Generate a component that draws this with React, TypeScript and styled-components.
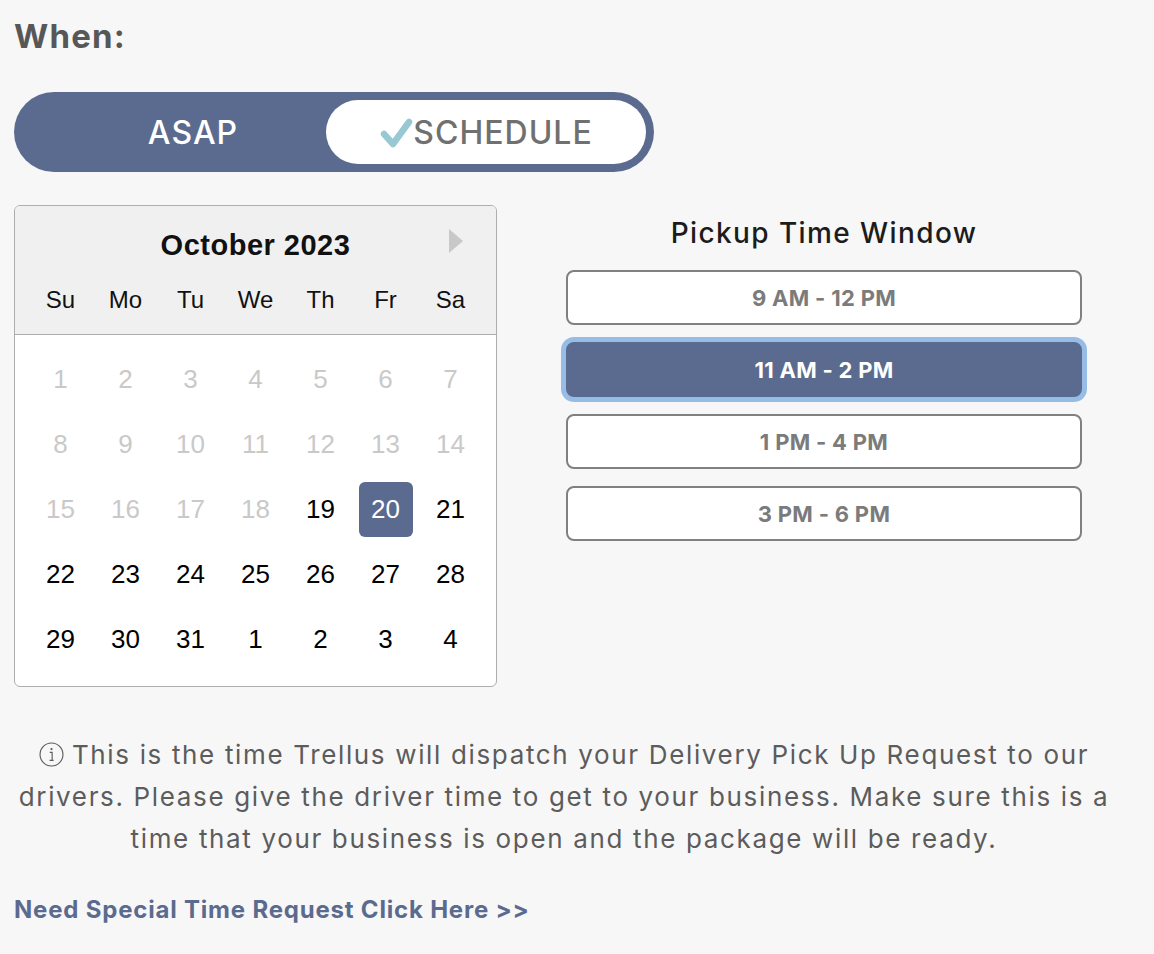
import React from "react";
import styled, { createGlobalStyle, css } from "styled-components";

const GlobalStyle = createGlobalStyle`
  body {
    margin: 0;
    background: #f7f7f7;
    font-family: Inter, "Noto Sans", sans-serif;
  }
`;

const SLATE = "#5b6b8f";

const Page = styled.div`
  width: 1100px;
  padding: 14px 14px 30px;
`;

const Heading = styled.h2`
  margin: 0;
  font-size: 33px;
  line-height: 44px;
  font-weight: 700;
  color: #575757;
  letter-spacing: 1.2px;
`;

const Toggle = styled.div`
  margin-top: 34px;
  width: 640px;
  height: 80px;
  box-sizing: border-box;
  padding: 8px;
  border-radius: 40px;
  background: ${SLATE};
  display: flex;
  align-items: stretch;
`;

const ToggleOption = styled.button<{ $active?: boolean }>`
  border: none;
  border-radius: 32px;
  font-family: Inter, "Noto Sans", sans-serif;
  font-size: 32px;
  font-weight: 500;
  letter-spacing: 1px;
  display: flex;
  align-items: center;
  justify-content: center;
  cursor: pointer;
  ${(p) =>
    p.$active
      ? css`
          width: 320px;
          background: #fff;
          color: #707070;
        `
      : css`
          flex: 1;
          padding-left: 44px;
          background: transparent;
          color: #fff;
        `}
`;

const Check = styled.svg`
  width: 34px;
  height: 32px;
  margin-top: 2px;
`;

const Body = styled.div`
  margin-top: 33px;
  display: flex;
  gap: 69px;
  align-items: flex-start;
`;

const Calendar = styled.div`
  width: 483px;
  box-sizing: border-box;
  border: 1.5px solid #adadad;
  border-radius: 6px;
  background: #fff;
  overflow: hidden;
  font-family: "Liberation Sans", Arial, sans-serif;
`;

const CalHeader = styled.div`
  background: #f0f0f0;
  border-bottom: 1.5px solid #adadad;
  padding: 20px 13px 6px;
`;

const TitleRow = styled.div`
  display: grid;
  grid-template-columns: 1fr auto 1fr;
  align-items: center;
  height: 38px;
`;

const MonthTitle = styled.div`
  font-size: 29px;
  font-weight: 700;
  color: #111;
  letter-spacing: 0.5px;
`;

const NextButton = styled.button`
  justify-self: end;
  margin-right: 20px;
  margin-top: -8px;
  border: none;
  background: none;
  padding: 0;
  width: 0;
  height: 0;
  border-top: 12px solid transparent;
  border-bottom: 12px solid transparent;
  border-left: 14px solid #c8c8c8;
  cursor: pointer;
`;

const Grid = styled.div`
  display: grid;
  grid-template-columns: repeat(7, 65px);
`;

const WeekDay = styled.div`
  height: 56px;
  display: flex;
  align-items: center;
  justify-content: center;
  font-size: 24px;
  color: #111;
  margin-top: 8px;
`;

const DaysBody = styled.div`
  padding: 12px 13px 14px;
`;

const DayCell = styled.div`
  height: 65px;
  display: flex;
  align-items: center;
  justify-content: center;
`;

const Day = styled.button<{ $muted?: boolean; $selected?: boolean }>`
  width: 54px;
  height: 55px;
  border: none;
  border-radius: 6px;
  font-family: "Liberation Sans", Arial, sans-serif;
  font-size: 26px;
  padding: 0;
  cursor: ${(p) => (p.$muted ? "default" : "pointer")};
  background: ${(p) => (p.$selected ? SLATE : "transparent")};
  color: ${(p) => (p.$selected ? "#fff" : p.$muted ? "#c9c9c9" : "#000")};
`;

const TimeColumn = styled.div`
  width: 516px;
  display: flex;
  flex-direction: column;
  align-items: stretch;
  gap: 17px;
`;

const TimeTitle = styled.div`
  margin-top: 10px;
  margin-bottom: 2px;
  text-align: center;
  font-size: 28px;
  line-height: 36px;
  font-weight: 500;
  color: #1c1c1c;
  letter-spacing: 1.4px;
`;

const Slot = styled.button<{ $selected?: boolean }>`
  height: 55px;
  border-radius: 8px;
  border: 2px solid ${(p) => (p.$selected ? SLATE : "#808080")};
  background: ${(p) => (p.$selected ? SLATE : "#fff")};
  color: ${(p) => (p.$selected ? "#fff" : "#7b7b7b")};
  box-shadow: ${(p) => (p.$selected ? "0 0 0 5px #97bde6" : "none")};
  font-family: Inter, "Noto Sans", sans-serif;
  font-size: 22px;
  font-weight: 700;
  letter-spacing: 0.3px;
  cursor: pointer;
`;

const Info = styled.p`
  margin: 47px 0 0;
  text-align: center;
  font-size: 26px;
  line-height: 42px;
  color: #5c5c5c;
  letter-spacing: 1.65px;
`;

const InfoIcon = styled.svg`
  width: 25px;
  height: 25px;
  vertical-align: -3px;
  margin-right: 8px;
`;

const SpecialLink = styled.a`
  display: inline-block;
  margin-top: 36px;
  font-size: 24px;
  line-height: 28px;
  font-weight: 700;
  color: ${SLATE};
  text-decoration: none;
  letter-spacing: 0.8px;
`;

const weekDays = ["Su", "Mo", "Tu", "We", "Th", "Fr", "Sa"];

const days: { n: number; muted: boolean }[] = [
  ...Array.from({ length: 31 }, (_, i) => ({ n: i + 1, muted: i + 1 < 19 })),
  ...[1, 2, 3, 4].map((n) => ({ n, muted: false })),
];

const slots = ["9 AM - 12 PM", "11 AM - 2 PM", "1 PM - 4 PM", "3 PM - 6 PM"];

const App: React.FC = () => {
  const [selectedDay, setSelectedDay] = React.useState(20);
  const [slot, setSlot] = React.useState(1);

  return (
    <>
      <GlobalStyle />
      <Page>
        <Heading>When:</Heading>
        <Toggle>
          <ToggleOption>ASAP</ToggleOption>
          <ToggleOption $active>
            <Check viewBox="0 0 34 32">
              <path
                d="M5 17 L14 27 L30 5"
                fill="none"
                stroke="#98c8d3"
                strokeWidth="6.5"
                strokeLinecap="round"
                strokeLinejoin="round"
              />
            </Check>
            SCHEDULE
          </ToggleOption>
        </Toggle>

        <Body>
          <Calendar>
            <CalHeader>
              <TitleRow>
                <span />
                <MonthTitle>October 2023</MonthTitle>
                <NextButton aria-label="Next month" />
              </TitleRow>
              <Grid>
                {weekDays.map((d) => (
                  <WeekDay key={d}>{d}</WeekDay>
                ))}
              </Grid>
            </CalHeader>
            <DaysBody>
              <Grid>
                {days.map((d, i) => (
                  <DayCell key={i}>
                    <Day
                      $muted={d.muted}
                      $selected={i < 31 && d.n === selectedDay}
                      onClick={() => !d.muted && i < 31 && setSelectedDay(d.n)}
                    >
                      {d.n}
                    </Day>
                  </DayCell>
                ))}
              </Grid>
            </DaysBody>
          </Calendar>

          <TimeColumn>
            <TimeTitle>Pickup Time Window</TimeTitle>
            {slots.map((s, i) => (
              <Slot key={s} $selected={i === slot} onClick={() => setSlot(i)}>
                {s}
              </Slot>
            ))}
          </TimeColumn>
        </Body>

        <Info>
          <InfoIcon viewBox="0 0 24 24">
            <circle cx="12" cy="12" r="11" fill="none" stroke="#5c5c5c" strokeWidth="1.1" />
            <circle cx="12" cy="6.8" r="1.1" fill="#5c5c5c" />
            <path d="M10.3 10 H12.6 V17.6 M10.2 17.6 H14" fill="none" stroke="#5c5c5c" strokeWidth="1.1" />
          </InfoIcon>
          This is the time Trellus will dispatch your Delivery Pick Up Request to our drivers.
          Please give the driver time to get to your business. Make sure this is a time that
          your business is open and the package will be ready.
        </Info>

        <SpecialLink href="#">Need Special Time Request Click Here &gt;&gt;</SpecialLink>
      </Page>
    </>
  );
};

export default App;
